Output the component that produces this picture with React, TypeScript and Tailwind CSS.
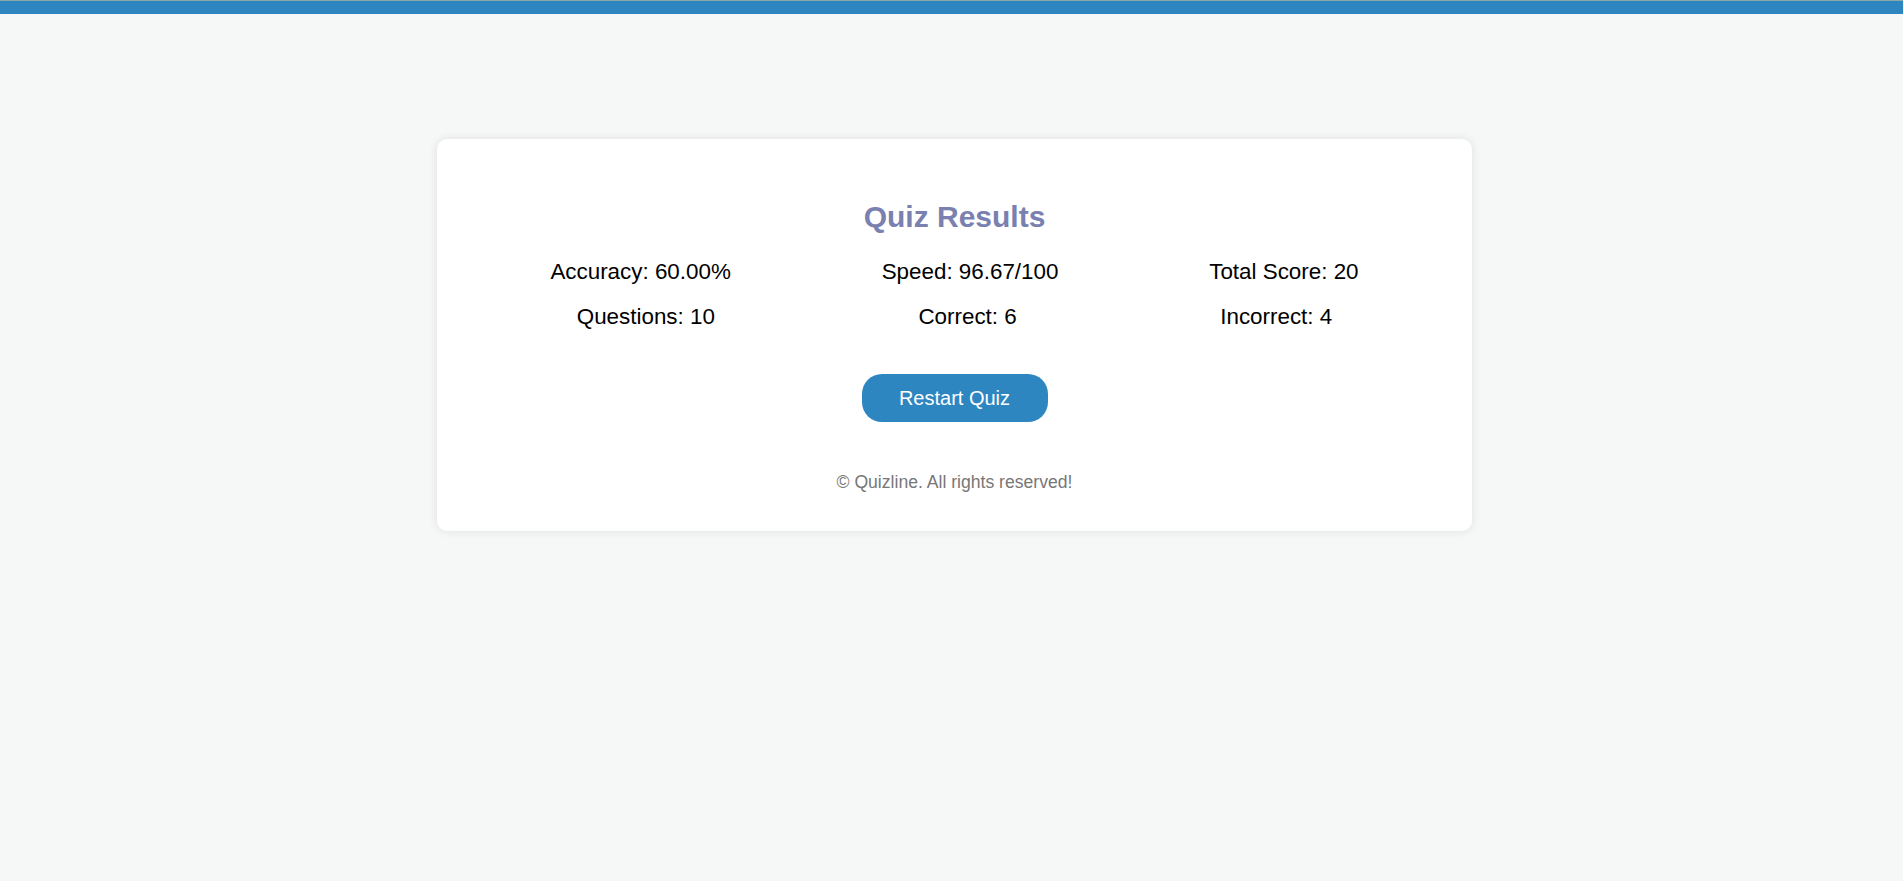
import React from "react";

const row1 = ["Accuracy: 60.00%", "Speed: 96.67/100", "Total Score: 20"];
const row2 = ["Questions: 10", "Correct: 6", "Incorrect: 4"];

export default function App() {
  return (
    <div
      className="min-h-screen bg-[#f6f8f7]"
      style={{ fontFamily: '"Liberation Sans", Arial, sans-serif' }}
    >
      {/* Top bar */}
      <div className="h-px bg-[#8fa6a6]" />
      <div className="h-[13px] bg-[#2e86c1]" />

      {/* Results card */}
      <div className="ml-[437px] mt-[125px] w-[1035px] rounded-[10px] bg-white px-[38px] pt-[61px] pb-[39px] shadow-[0_0_10px_rgba(0,0,0,0.1)]">
        <h2 className="text-center text-[30px] font-bold leading-[34px] text-[#7a80b0]">
          Quiz Results
        </h2>

        <div className="mt-[25px] flex justify-around text-[22.4px] leading-[25px] text-black">
          {row1.map((s) => (
            <span key={s}>{s}</span>
          ))}
        </div>
        <div className="mt-[20px] flex justify-around text-[22.4px] leading-[25px] text-black">
          {row2.map((s) => (
            <span key={s}>{s}</span>
          ))}
        </div>

        <div className="mt-[45px] flex justify-center">
          <button className="h-[48px] w-[186px] rounded-[20px] bg-[#2e86c1] text-[20px] text-white">
            Restart Quiz
          </button>
        </div>

        <p className="mt-[50px] text-center text-[17.6px] leading-[20px] text-[#777]">
          © Quizline. All rights reserved!
        </p>
      </div>
    </div>
  );
}
